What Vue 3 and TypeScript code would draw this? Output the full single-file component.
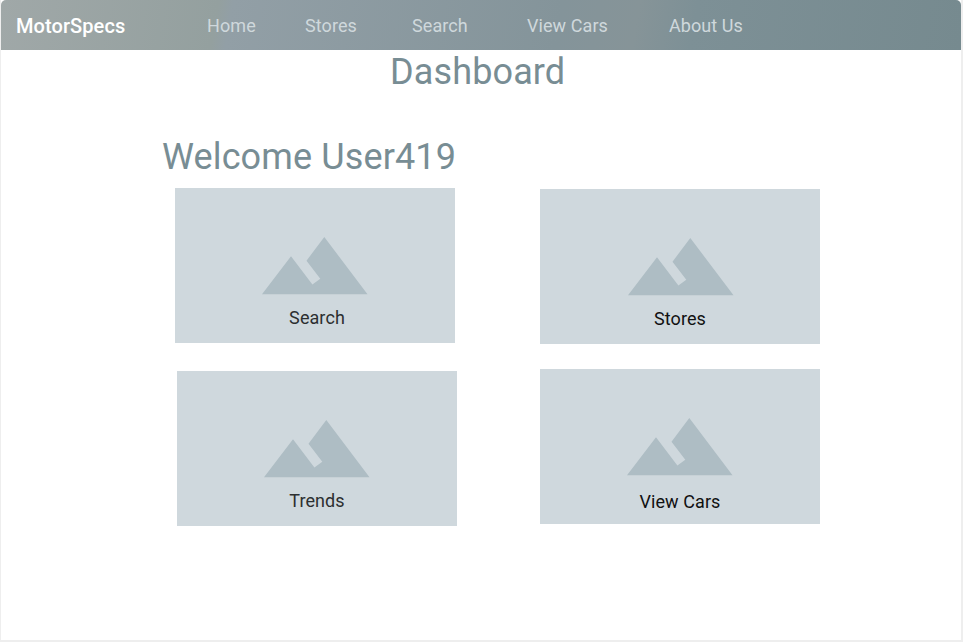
<script setup lang="ts">
interface NavItem {
  id: string
  label: string
}
interface Tile {
  id: string
  label: string
}

const navItems: NavItem[] = [
  { id: 'home', label: 'Home' },
  { id: 'stores', label: 'Stores' },
  { id: 'search', label: 'Search' },
  { id: 'view-cars', label: 'View Cars' },
  { id: 'about', label: 'About Us' },
]

const columns: Tile[][] = [
  [
    { id: 'search', label: 'Search' },
    { id: 'trends', label: 'Trends' },
  ],
  [
    { id: 'stores', label: 'Stores' },
    { id: 'cars', label: 'View Cars' },
  ],
]
</script>

<template>
  <div class="window">
    <header class="navbar">
      <span class="brand">MotorSpecs</span>
      <nav class="nav">
        <a v-for="item in navItems" :key="item.id" class="nav-link" :class="`nav-${item.id}`">{{ item.label }}</a>
      </nav>
    </header>
    <main class="content">
      <h1 class="title">Dashboard</h1>
      <h2 class="welcome">Welcome User419</h2>
      <div class="tiles">
        <div v-for="(column, i) in columns" :key="i" class="column">
          <section v-for="tile in column" :key="tile.id" class="tile" :class="`tile-${tile.id}`">
            <svg class="mountains" width="106" height="58" viewBox="0 0 106 58">
              <path d="M0 57.3 29 19.3 50.4 47.6 58.3 41.8 44.5 23.7 62.3 0 105.5 57.3Z" />
            </svg>
            <span class="tile-label">{{ tile.label }}</span>
          </section>
        </div>
      </div>
    </main>
  </div>
</template>

<style>
body {
  background: #fff;
  overflow: hidden;
}
</style>

<style scoped>
.window {
  box-sizing: border-box;
  width: 963px;
  height: 642px;
  border: solid #eee;
  border-width: 0 2px 2px 1px;
  background: #fff;
  font-family: Roboto, "Liberation Sans", sans-serif;
}
.navbar {
  display: flex;
  height: 50px;
  padding-left: 15px;
  border-radius: 5px 5px 0 0;
  background: linear-gradient(100deg, #a0a8a8 0%, #94a09f 22.5%, #929fa6 24%, #84949a 58%, #869498 66%, #7d9096 72%, #768a8f 100%);
  line-height: 52px;
  white-space: nowrap;
}
.brand {
  width: 191px;
  color: #fff;
  font-size: 20px;
  font-weight: 500;
  letter-spacing: 0.08px;
}
.nav {
  display: flex;
  color: #cfd8dc;
  font-size: 18px;
  letter-spacing: 0.08px;
}
.nav-home { width: 98px; }
.nav-stores { width: 107px; }
.nav-search { width: 115px; }
.nav-view-cars { width: 142px; }
.title,
.welcome {
  margin: 0;
  color: #788d94;
  font-size: 36px;
  font-weight: 400;
  letter-spacing: 0.13px;
  line-height: 42px;
}
.title {
  padding: 1px 0 0 389px;
}
.welcome {
  padding: 43px 0 0 161px;
}
.tiles {
  display: flex;
  gap: 83px;
  padding: 10px 0 0 174px;
}
.column {
  display: flex;
  flex-direction: column;
}
.tile {
  box-sizing: border-box;
  display: flex;
  flex-direction: column;
  align-items: center;
  width: 280px;
  height: 155px;
  padding-top: 49px;
  background: #cfd8dd;
}
.mountains {
  display: block;
  flex: none;
  fill: #aebdc4;
}
.tile-label {
  margin-top: 12px;
  padding-left: 4px;
  color: #2c2f30;
  font-size: 18px;
  letter-spacing: 0.08px;
  line-height: 22px;
}
.tile-trends { margin: 28px 0 0 2px; }
.tile-trends .tile-label { padding-left: 0; }
.tile-stores { margin-top: 1px; }
.tile-stores .mountains { margin-left: 1px; }
.tile-stores .tile-label { padding-left: 0; color: #111; }
.tile-cars { margin-top: 25px; }
.tile-cars .tile-label { margin-top: 15px; padding-left: 0; color: #111; }
</style>
